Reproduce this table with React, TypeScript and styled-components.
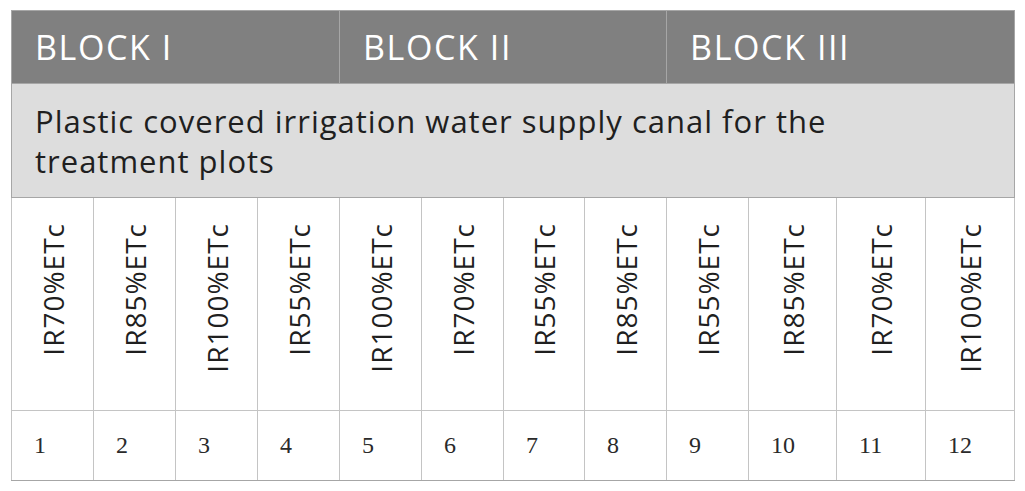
import React from "react";
import styled, { createGlobalStyle } from "styled-components";

const Global = createGlobalStyle`
  html, body { margin: 0; padding: 0; background: #ffffff; }
`;

const Page = styled.div`
  padding: 10px 0 0 11px;
`;

const Table = styled.table`
  border-collapse: collapse;
  table-layout: fixed;
  width: 1004px;
  font-family: "Open Sans", "Noto Sans", sans-serif;
  color: #1f1f1f;
`;

const Col = styled.col<{ $w: number }>`
  width: ${(p) => p.$w}px;
`;

const BlockHead = styled.th`
  background: #808080;
  color: #ffffff;
  height: 72px;
  padding: 0 0 0 23px;
  text-align: left;
  font-weight: 400;
  font-size: 34px;
  letter-spacing: 1.6px;
  border: 1px solid #a6a6a6;
  border-bottom: none;
  vertical-align: middle;
`;

const NoteCell = styled.td`
  background: #dddddd;
  height: 96px;
  padding: 17px 150px 0 23px;
  font-size: 31px;
  letter-spacing: 1px;
  line-height: 40px;
  text-align: left;
  vertical-align: top;
  border: 1px solid #a6a6a6;
`;

const TreatCell = styled.td`
  height: 187px;
  padding: 25px 0 0 0;
  vertical-align: top;
  text-align: center;
  border: 1px solid #c4c4c4;
`;

const Vertical = styled.span`
  display: inline-block;
  writing-mode: vertical-rl;
  transform: rotate(180deg);
  font-size: 28px;
  letter-spacing: 1px;
  line-height: 28px;
  white-space: nowrap;
  color: #1f1f1f;
`;

const NumCell = styled.td`
  height: 69px;
  padding: 0 0 0 22px;
  font-family: "Liberation Serif", "Times New Roman", serif;
  font-size: 24px;
  color: #2a2a2a;
  vertical-align: middle;
  text-align: left;
  border: 1px solid #c4c4c4;
  border-bottom-color: #a6a6a6;
`;

const widths = [82, 82, 82, 82, 82, 82, 81, 82, 82, 88, 89, 89];
const treatments = [
  "IR70%ETc",
  "IR85%ETc",
  "IR100%ETc",
  "IR55%ETc",
  "IR100%ETc",
  "IR70%ETc",
  "IR55%ETc",
  "IR85%ETc",
  "IR55%ETc",
  "IR85%ETc",
  "IR70%ETc",
  "IR100%ETc",
];

export default function App() {
  return (
    <>
      <Global />
      <Page>
        <Table>
          <colgroup>
            {widths.map((w, i) => (
              <Col key={i} $w={w} />
            ))}
          </colgroup>
          <thead>
            <tr>
              <BlockHead colSpan={4}>BLOCK I</BlockHead>
              <BlockHead colSpan={4}>BLOCK II</BlockHead>
              <BlockHead colSpan={4}>BLOCK III</BlockHead>
            </tr>
          </thead>
          <tbody>
            <tr>
              <NoteCell colSpan={12}>
                Plastic covered irrigation water supply canal for the treatment plots
              </NoteCell>
            </tr>
            <tr>
              {treatments.map((t, i) => (
                <TreatCell key={i}>
                  <Vertical>{t}</Vertical>
                </TreatCell>
              ))}
            </tr>
            <tr>
              {treatments.map((_, i) => (
                <NumCell key={i}>{i + 1}</NumCell>
              ))}
            </tr>
          </tbody>
        </Table>
      </Page>
    </>
  );
}
